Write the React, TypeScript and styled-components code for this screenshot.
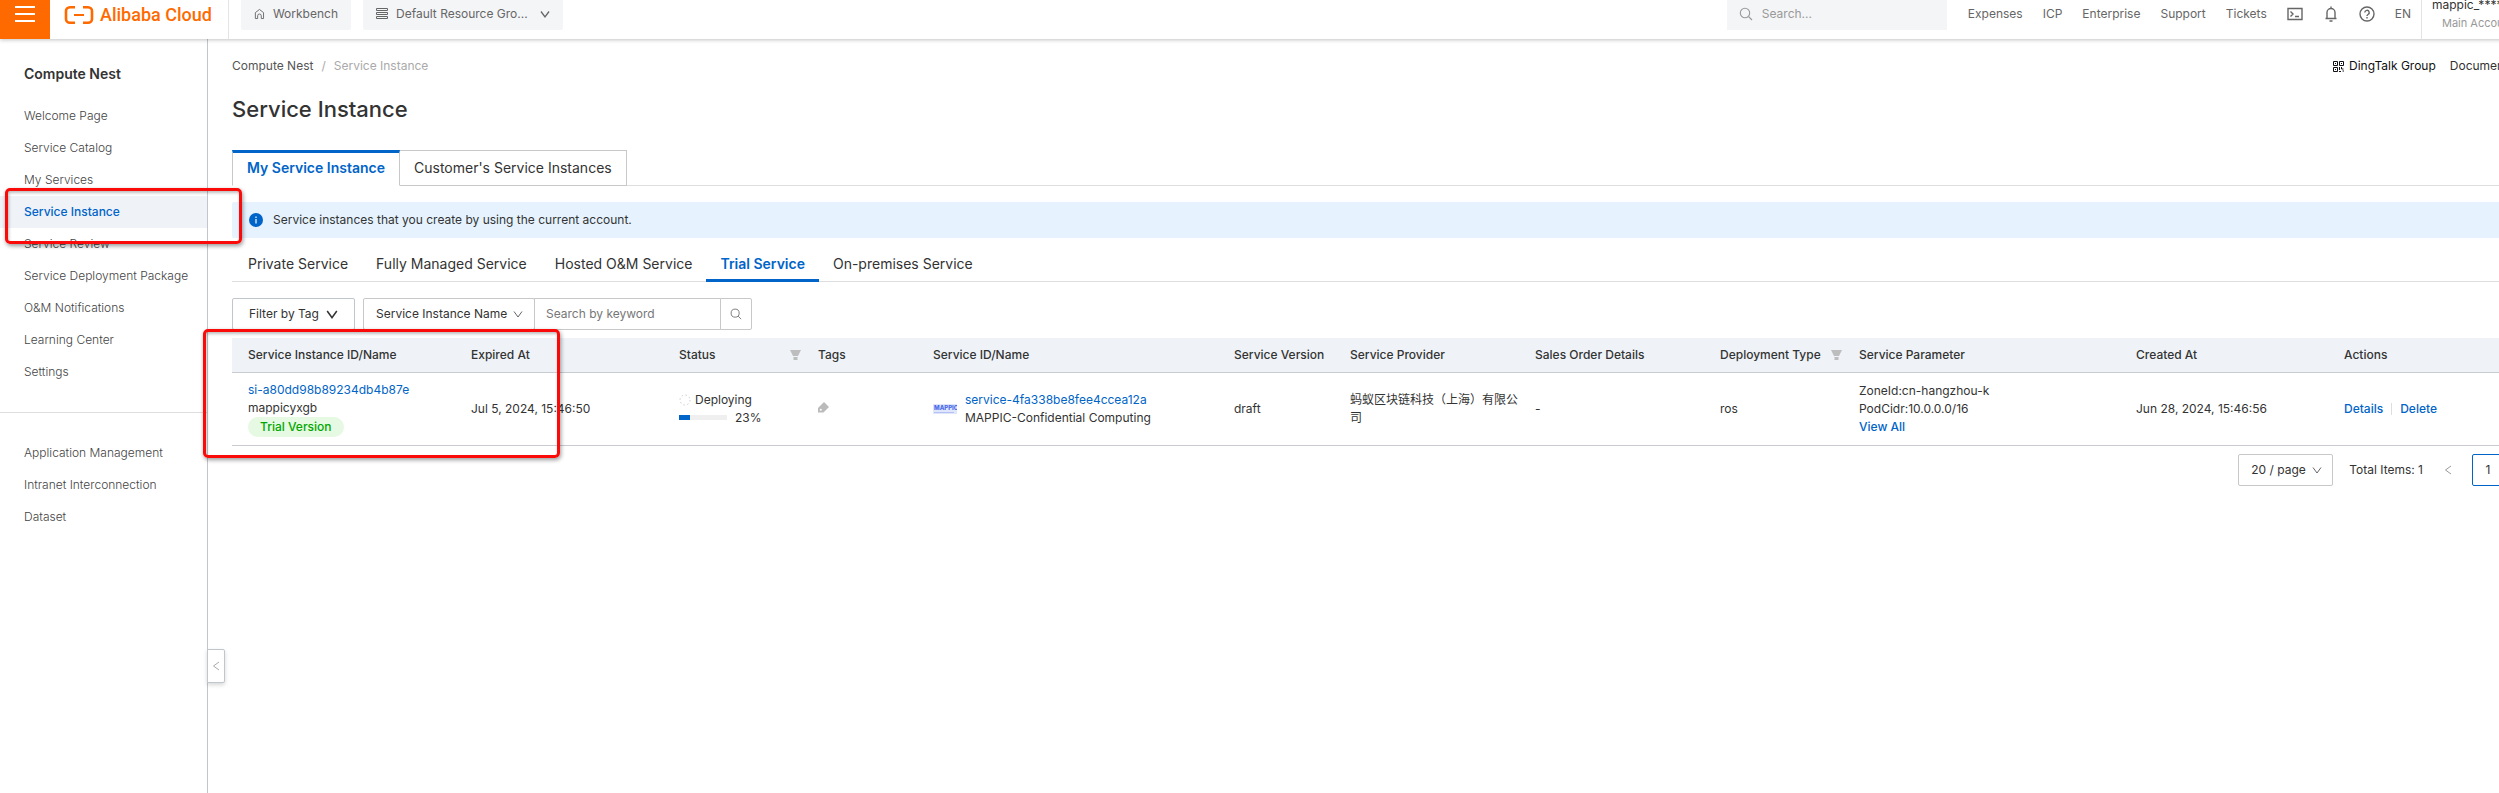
import React from "react";
import styled, { createGlobalStyle, css } from "styled-components";

const GlobalStyle = createGlobalStyle`
  *, *::before, *::after { box-sizing: border-box; }
  html, body { margin: 0; padding: 0; }
  body {
    background: #fff;
    color: #333;
    font-family: Inter, "Noto Sans CJK SC", sans-serif;
    font-size: 12px;
    line-height: 18px;
  }
  button, input, select { font: inherit; color: inherit; margin: 0; }
  a { color: inherit; text-decoration: none; }
`;

const Viewport = styled.div`
  position: relative;
  overflow: hidden;
  min-height: 100vh;
  display: flex;
  flex-direction: column;
`;

/* The console is wider than the window; the rest runs off to the right. */
const Console = styled.div`
  width: calc(100% + 100px);
  flex: 1;
  display: flex;
  flex-direction: column;
`;

/* ---------- header ---------- */

const Header = styled.header`
  position: relative;
  z-index: 2;
  display: flex;
  align-items: center;
  height: 50px;
  margin-top: -11px;
  background: #fff;
  box-shadow: 0 1px 4px rgba(0, 0, 0, 0.24);
  color: #666;
`;

const MenuButton = styled.button`
  display: flex;
  align-items: center;
  justify-content: center;
  width: 50px;
  height: 50px;
  padding: 0;
  border: 0;
  background: #ff6a00;
`;

const Logo = styled.a`
  display: flex;
  align-items: center;
  gap: 6px;
  width: 179px;
  height: 50px;
  padding: 2px 0 0 14px;
  border-right: 1px solid #e3e4e6;
  color: #ff6a00;
  font-family: Roboto, sans-serif;
  font-size: 18px;
  font-weight: 500;
  white-space: nowrap;
`;

const HeaderButton = styled.button<{ $width: number }>`
  display: flex;
  align-items: center;
  gap: 8px;
  width: ${(p) => p.$width}px;
  height: 32px;
  margin-left: 12px;
  padding: 0 13px;
  border: 0;
  border-radius: 2px;
  background: #f4f5f7;
  white-space: nowrap;
  svg:last-child:not(:first-child) { margin-left: auto; }
`;

const HeaderSearch = styled.label`
  display: flex;
  align-items: center;
  gap: 9px;
  width: 220px;
  height: 32px;
  margin-left: auto;
  padding-left: 12px;
  background: #f4f5f7;
  color: #999;
  input {
    width: 160px;
    padding: 0;
    border: 0;
    outline: 0;
    background: transparent;
  }
  input::placeholder { color: #999; opacity: 1; }
`;

const HeaderNav = styled.nav`
  display: flex;
  align-items: center;
  gap: 20px;
  padding: 0 10px 0 21px;
`;

const IconButton = styled.button`
  display: flex;
  padding: 0;
  border: 0;
  background: none;
`;

const Account = styled.div`
  display: flex;
  flex-direction: column;
  justify-content: center;
  width: 178px;
  height: 50px;
  padding-left: 10px;
  border-left: 1px solid #e3e4e6;
  color: #333;
  small {
    padding-left: 10px;
    color: #999;
    font-size: 11px;
  }
`;

/* ---------- side navigation ---------- */

const Body = styled.div`
  flex: 1;
  display: flex;
`;

const Sidebar = styled.aside`
  position: relative;
  flex: none;
  width: 208px;
  padding-top: 25px;
  border-right: 1px solid #c0c6cc;
`;

const SideTitle = styled.h2`
  margin: 0 0 16px;
  padding-left: 24px;
  font-size: 14px;
  line-height: 20px;
  font-weight: 600;
`;

const SideList = styled.ul`
  margin: 0;
  padding: 0;
  list-style: none;
  & + & {
    margin-top: 24px;
    padding-top: 24px;
    border-top: 1px solid #dedede;
  }
`;

const SideLink = styled.a<{ $active?: boolean }>`
  display: block;
  padding-left: 24px;
  line-height: 32px;
  color: #444;
  font-weight: 300;
  ${(p) => p.$active && css`
    background: #eff3f8;
    color: #0064c8;
    font-weight: 500;
  `}
`;

const CollapseHandle = styled.button`
  position: absolute;
  top: 610px;
  left: 207px;
  display: flex;
  align-items: center;
  justify-content: center;
  width: 18px;
  height: 34px;
  padding: 0;
  border: 1px solid #c0c6cc;
  border-radius: 0 2px 2px 0;
  background: #fff;
  box-shadow: 0 2px 4px rgba(0, 0, 0, 0.16);
  color: #aaa;
`;

/* ---------- page content ---------- */

const Main = styled.main`
  flex: 1;
  min-width: 0;
  padding: 18px 0 0 24px;
`;

const TopRow = styled.div`
  display: flex;
  justify-content: space-between;
`;

const Crumbs = styled.nav`
  display: flex;
  gap: 8px;
  color: #aaa;
  a { color: #555; }
`;

const TopLinks = styled.div`
  display: flex;
  gap: 14px;
  width: 266px;
  a { display: flex; align-items: center; gap: 5px; }
  a:first-child { color: #111; }
`;

const PageTitle = styled.h1`
  margin: 18px 0 25px;
  font-size: 22px;
  line-height: 32px;
  font-weight: 500;
`;

const Tabs = styled.div`
  display: flex;
  border-bottom: 1px solid #dedede;
  font-size: 14px;
`;

const Tab = styled.button<{ $active?: boolean }>`
  height: 36px;
  margin-bottom: -1px;
  padding: 0 14px;
  border: 1px solid #c8c8c8;
  border-left-width: 0;
  background: #fff;
  ${(p) => p.$active && css`
    padding-bottom: 2px;
    border-left-width: 1px;
    border-top: 3px solid #0064c8;
    border-bottom-color: #fff;
    color: #0064c8;
    font-weight: 600;
  `}
`;

const Notice = styled.p`
  display: flex;
  align-items: center;
  gap: 10px;
  height: 36px;
  margin: 16px 0 8px;
  padding-left: 17px;
  border-radius: 2px;
  background: #e6f3ff;
`;

const SubTabs = styled.div`
  display: flex;
  height: 36px;
  padding-left: 2px;
  border-bottom: 1px solid #dedede;
  font-size: 14px;
`;

const SubTab = styled.button<{ $active?: boolean }>`
  height: 36px;
  padding: 3px 14px 0;
  border: 0;
  border-bottom: 3px solid transparent;
  background: none;
  ${(p) => p.$active && css`
    border-bottom-color: #0064c8;
    color: #0064c8;
    font-weight: 600;
  `}
`;

const Toolbar = styled.div`
  display: flex;
  height: 32px;
  margin: 16px 0 8px;
`;

const TagButton = styled.button`
  display: flex;
  align-items: center;
  justify-content: space-between;
  width: 123px;
  margin-right: 8px;
  padding: 0 16px;
  border: 1px solid #c0c6cc;
  border-radius: 2px;
  background: #fff;
`;

const SelectBox = styled.span<{ $width: number; $right: number }>`
  position: relative;
  display: block;
  width: ${(p) => p.$width}px;
  height: 32px;
  color: #333;
  select {
    appearance: none;
    width: 100%;
    height: 32px;
    padding: 0 0 0 12px;
    border: 1px solid #c8c8c8;
    border-radius: 2px;
    background: #fff;
    outline: 0;
  }
  svg {
    position: absolute;
    top: 11px;
    right: ${(p) => p.$right}px;
    color: #666;
    pointer-events: none;
  }
`;

const KeywordInput = styled.input`
  width: 187px;
  margin-left: -1px;
  padding: 0 11px;
  border: 1px solid #c8c8c8;
  background: #fff;
  outline: 0;
  &::placeholder { color: #777; opacity: 1; }
`;

const SearchButton = styled.button`
  display: flex;
  align-items: center;
  justify-content: center;
  width: 32px;
  margin-left: -1px;
  padding: 0;
  border: 1px solid #c8c8c8;
  border-radius: 0 2px 2px 0;
  background: #fff;
  color: #777;
`;

const Table = styled.table`
  width: 100%;
  table-layout: fixed;
  border-collapse: collapse;
  text-align: left;
  th, td { padding: 0 0 0 16px; border-bottom: 1px solid #c8cbd0; }
  th { height: 34px; background: #eff3f8; font-weight: 500; }
  td { height: 73px; }
`;

const Heading = styled.span`
  display: flex;
  align-items: center;
  justify-content: space-between;
`;

const Link = styled.a<{ $strong?: boolean }>`
  color: #0064c8;
  font-weight: ${(p) => (p.$strong ? 500 : 400)};
`;

const Stack = styled.div`
  display: flex;
  flex-direction: column;
  align-items: flex-start;
`;

const Pill = styled.span`
  padding: 1px 12px;
  border-radius: 10px;
  background: #e6f9e2;
  color: #00a700;
  font-weight: 500;
`;

const Inline = styled.div<{ $gap: number }>`
  display: flex;
  align-items: center;
  gap: ${(p) => p.$gap}px;
`;

const Progress = styled.span<{ $value: number }>`
  width: 48px;
  height: 5px;
  background: linear-gradient(to right, #0064c8 ${(p) => p.$value}%, #efefef ${(p) => p.$value}%);
`;

const Separator = styled.span`
  width: 1px;
  height: 12px;
  background: #dedede;
`;

const Pagination = styled.nav`
  display: flex;
  align-items: center;
  justify-content: flex-end;
  padding: 8px 63px 0 0;
`;

const Total = styled.span`
  margin: 0 9px 0 16px;
`;

const PageButton = styled.button<{ $current?: boolean }>`
  display: flex;
  align-items: center;
  justify-content: center;
  width: 32px;
  height: 32px;
  margin-left: ${(p) => (p.$current ? 8 : 0)}px;
  padding: 0;
  border: ${(p) => (p.$current ? "1px solid #0064c8" : "0")};
  border-radius: 2px;
  background: #fff;
  color: ${(p) => (p.$current ? "#333" : "#999")};
`;

const Highlight = styled.div<{ $x: number; $y: number; $w: number; $h: number }>`
  position: absolute;
  z-index: 5;
  left: ${(p) => p.$x}px;
  top: ${(p) => p.$y}px;
  width: ${(p) => p.$w}px;
  height: ${(p) => p.$h}px;
  border: 3px solid #fb0a0a;
  border-radius: 5px;
  box-shadow: 1px 2px 4px rgba(0, 0, 0, 0.4), inset 1px 2px 3px rgba(0, 0, 0, 0.25);
  pointer-events: none;
`;

/* ---------- icons ---------- */

const Chevron = ({ size = 10, stroke = 1, dir = "down" }: { size?: number; stroke?: number; dir?: "down" | "left" | "right" }) => {
  const d = { down: "M1 2.500 5 8l4-5.500", left: "M8 1 2.500 5 8 9", right: "M2 1l5.500 4L2 9" }[dir];
  return (
    <svg width={size} height={size} viewBox="0 0 10 10" fill="none" stroke="currentColor" strokeWidth={stroke} aria-hidden="true">
      <path d={d} />
    </svg>
  );
};

const Magnifier = ({ size }: { size: number }) => (
  <svg width={size} height={size} viewBox="0 0 14 14" fill="none" stroke="currentColor" strokeWidth="1.1" aria-hidden="true">
    <circle cx="6" cy="6" r="4.700" />
    <path d="M9.500 9.500 13 13" />
  </svg>
);

const FilterIcon = () => (
  <svg width="12" height="12" viewBox="0 0 12 12" fill="#bdbdbd" aria-hidden="true">
    <path d="M0 1h11L8 7H3z" />
    <path d="M3.500 8h4v3h-4z" />
  </svg>
);

const BracketLogo = () => (
  <svg width="30" height="20" viewBox="0 0 30 20" fill="none" stroke="currentColor" aria-hidden="true">
    <path d="M11 2.200H6C3.500 2.200 2 4 2 6v8c0 2 1.500 3.800 4 3.800h5" strokeWidth="2.600" />
    <path d="M19 2.200h5c2.500 0 4 1.800 4 3.800v8c0 2-1.500 3.800-4 3.800h-5" strokeWidth="2.600" />
    <path d="M10 10h10" strokeWidth="2" />
  </svg>
);

const columns: { label: string; width?: number; filter?: boolean }[] = [
  { label: "Service Instance ID/Name", width: 223 },
  { label: "Expired At", width: 208 },
  { label: "Status", width: 139, filter: true },
  { label: "Tags", width: 115 },
  { label: "Service ID/Name", width: 301 },
  { label: "Service Version", width: 116 },
  { label: "Service Provider", width: 185 },
  { label: "Sales Order Details", width: 185 },
  { label: "Deployment Type", width: 139, filter: true },
  { label: "Service Parameter", width: 277 },
  { label: "Created At", width: 208 },
  { label: "Actions" },
];

const mainLinks = ["Welcome Page", "Service Catalog", "My Services", "Service Instance", "Service Review", "Service Deployment Package", "O&M Notifications", "Learning Center", "Settings"];
const moreLinks = ["Application Management", "Intranet Interconnection", "Dataset"];
const subTabs = ["Private Service", "Fully Managed Service", "Hosted O&M Service", "Trial Service", "On-premises Service"];

export default function App() {
  return (
    <Viewport>
      <GlobalStyle />
      <Console>
        <Header>
          <MenuButton aria-label="Menu">
            <svg width="20" height="18" viewBox="0 0 20 18" stroke="#fff" strokeWidth="2" aria-hidden="true">
              <path d="M0 2h20M0 9h20M0 16h20" />
            </svg>
          </MenuButton>
          <Logo href="#"><BracketLogo />Alibaba Cloud</Logo>
          <HeaderButton $width={110}>
            <svg width="12" height="12" viewBox="0 0 12 12" fill="none" stroke="currentColor" aria-hidden="true">
              <path d="M1.500 4.500 6 1l4.500 3.500v6.500h-2.500V8a2 2 0 0 0-4 0v3H1.500z" />
            </svg>
            Workbench
          </HeaderButton>
          <HeaderButton $width={200}>
            <svg width="12" height="12" viewBox="0 0 12 12" fill="none" stroke="currentColor" strokeWidth="1" aria-hidden="true">
              <path d="M.5.5h11v2H.5zM.5 4.500h11v2H.5zM.5 8.500h11v2H.5z" />
            </svg>
            Default Resource Gro...
            <Chevron stroke={1.3} />
          </HeaderButton>
          <HeaderSearch>
            <Magnifier size={14} />
            <input type="search" placeholder="Search..." aria-label="Search" />
          </HeaderSearch>
          <HeaderNav>
            <a href="#">Expenses</a>
            <a href="#">ICP</a>
            <a href="#">Enterprise</a>
            <a href="#">Support</a>
            <a href="#">Tickets</a>
            <IconButton aria-label="Cloud Shell">
              <svg width="16" height="16" viewBox="0 0 16 16" fill="none" stroke="currentColor" strokeWidth="1.4" aria-hidden="true">
                <path d="M1 2.500h14v11H1zM3.500 5.500 6 8l-2.500 2.500M8 10.500h4" />
              </svg>
            </IconButton>
            <IconButton aria-label="Notifications">
              <svg width="16" height="16" viewBox="0 0 16 16" fill="none" stroke="currentColor" strokeWidth="1.4" aria-hidden="true">
                <path d="M8 .5V2M2.500 12.500h11M4 12.500V6.500a4 4 0 0 1 8 0v6M6.500 15h3" />
              </svg>
            </IconButton>
            <IconButton aria-label="Help">
              <svg width="16" height="16" viewBox="0 0 16 16" fill="none" stroke="currentColor" strokeWidth="1.4" aria-hidden="true">
                <circle cx="8" cy="8" r="7" />
                <path d="M5.800 6.500a2.200 2.200 0 1 1 3.200 2c-.7.4-1 .7-1 1.500M8 11v1.500" />
              </svg>
            </IconButton>
            <a href="#">EN</a>
          </HeaderNav>
          <Account>
            mappic_****
            <small>Main Account</small>
          </Account>
        </Header>

        <Body>
          <Sidebar>
            <SideTitle>Compute Nest</SideTitle>
            <SideList>
              {mainLinks.map((t) => (
                <li key={t}><SideLink href="#" $active={t === "Service Instance"}>{t}</SideLink></li>
              ))}
            </SideList>
            <SideList>
              {moreLinks.map((t) => (
                <li key={t}><SideLink href="#">{t}</SideLink></li>
              ))}
            </SideList>
            <CollapseHandle aria-label="Collapse navigation"><Chevron dir="left" /></CollapseHandle>
          </Sidebar>

          <Main>
            <TopRow>
              <Crumbs aria-label="Breadcrumb">
                <a href="#">Compute Nest</a><span>/</span><span>Service Instance</span>
              </Crumbs>
              <TopLinks>
                <a href="#">
                  <svg width="11" height="11" viewBox="0 0 11 11" fill="none" stroke="currentColor" aria-hidden="true">
                    <path d="M.5.5h4v4h-4zM6.500.5h4v4h-4zM.5 6.500h4v4h-4zM2 2.500h1M8 2.500h1M2 8.500h1M6.500 6v3M8.500 6v2h2M6 10.500h2M9.500 10h1.500" />
                  </svg>
                  DingTalk Group
                </a>
                <a href="#">Documentation</a>
              </TopLinks>
            </TopRow>
            <PageTitle>Service Instance</PageTitle>
            <Tabs role="tablist">
              <Tab role="tab" aria-selected="true" $active>My Service Instance</Tab>
              <Tab role="tab" aria-selected="false">Customer's Service Instances</Tab>
            </Tabs>
            <Notice>
              <svg width="14" height="14" viewBox="0 0 14 14" aria-hidden="true">
                <circle cx="7" cy="7" r="7" fill="#0064c8" />
                <path d="M6.400 3.500h1.200v1.400H6.400zM6.400 6h1.200v4.500H6.400z" fill="#fff" />
              </svg>
              Service instances that you create by using the current account.
            </Notice>
            <SubTabs role="tablist">
              {subTabs.map((t) => (
                <SubTab key={t} role="tab" aria-selected={t === "Trial Service"} $active={t === "Trial Service"}>{t}</SubTab>
              ))}
            </SubTabs>
            <Toolbar>
              <TagButton>Filter by Tag <Chevron size={12} stroke={1.3} /></TagButton>
              <SelectBox $width={172} $right={12}>
                <select aria-label="Search field"><option>Service Instance Name</option></select>
                <Chevron />
              </SelectBox>
              <KeywordInput placeholder="Search by keyword" aria-label="Search by keyword" />
              <SearchButton aria-label="Search"><Magnifier size={12} /></SearchButton>
            </Toolbar>
            <Table>
              <colgroup>
                {columns.map((c) => <col key={c.label} width={c.width} />)}
              </colgroup>
              <thead>
                <tr>
                  {columns.map((c) => (
                    <th key={c.label} scope="col"><Heading>{c.label}{c.filter && <FilterIcon />}</Heading></th>
                  ))}
                </tr>
              </thead>
              <tbody>
                <tr>
                  <td>
                    <Stack>
                      <Link href="#">si-a80dd98b89234db4b87e</Link>
                      <span>mappicyxgb</span>
                      <Pill>Trial Version</Pill>
                    </Stack>
                  </td>
                  <td>Jul 5, 2024, 15:46:50</td>
                  <td>
                    <Inline $gap={4}>
                      <svg width="12" height="12" viewBox="0 0 12 12" fill="none" stroke="#ccc" strokeDasharray="1.500 2.400" aria-hidden="true">
                        <circle cx="6" cy="6" r="5" />
                      </svg>
                      Deploying
                    </Inline>
                    <Inline $gap={8}><Progress $value={23} />23%</Inline>
                  </td>
                  <td>
                    <svg width="11" height="11" viewBox="0 0 11 11" aria-label="Edit tags" role="img">
                      <path d="M6 0l5 5-5.500 5.500H0V6z" fill="#bbb" />
                      <circle cx="2.800" cy="7.800" r="1" fill="#fff" />
                    </svg>
                  </td>
                  <td>
                    <Inline $gap={8}>
                      <svg width="24" height="10" viewBox="0 0 24 10" aria-hidden="true">
                        <path d="M0 0h24v10H0z" fill="#dfe5fb" />
                        <text x="1" y="6" fontSize="6" fontWeight="800" fill="#4a6be8">MAPPIC</text>
                        <path d="M1 8.500h20" stroke="#b3c1f3" />
                      </svg>
                      <Stack>
                        <Link href="#">service-4fa338be8fee4ccea12a</Link>
                        <span>MAPPIC-Confidential Computing</span>
                      </Stack>
                    </Inline>
                  </td>
                  <td>draft</td>
                  <td>蚂蚁区块链科技（上海）有限公司</td>
                  <td>-</td>
                  <td>ros</td>
                  <td>
                    <Stack>
                      <span>ZoneId:cn-hangzhou-k</span>
                      <span>PodCidr:10.0.0.0/16</span>
                      <Link href="#" $strong>View All</Link>
                    </Stack>
                  </td>
                  <td>Jun 28, 2024, 15:46:56</td>
                  <td>
                    <Inline $gap={8}>
                      <Link href="#" $strong>Details</Link><Separator /><Link href="#" $strong>Delete</Link>
                    </Inline>
                  </td>
                </tr>
              </tbody>
            </Table>
            <Pagination aria-label="Pagination">
              <SelectBox $width={95} $right={11}>
                <select aria-label="Items per page"><option>20 / page</option></select>
                <Chevron />
              </SelectBox>
              <Total>Total Items: 1</Total>
              <PageButton aria-label="Previous page"><Chevron dir="left" /></PageButton>
              <PageButton $current>1</PageButton>
              <PageButton aria-label="Next page"><Chevron dir="right" /></PageButton>
            </Pagination>
          </Main>
        </Body>
      </Console>
      <Highlight $x={5} $y={188} $w={237} $h={56} />
      <Highlight $x={203} $y={329} $w={357} $h={129} />
    </Viewport>
  );
}
